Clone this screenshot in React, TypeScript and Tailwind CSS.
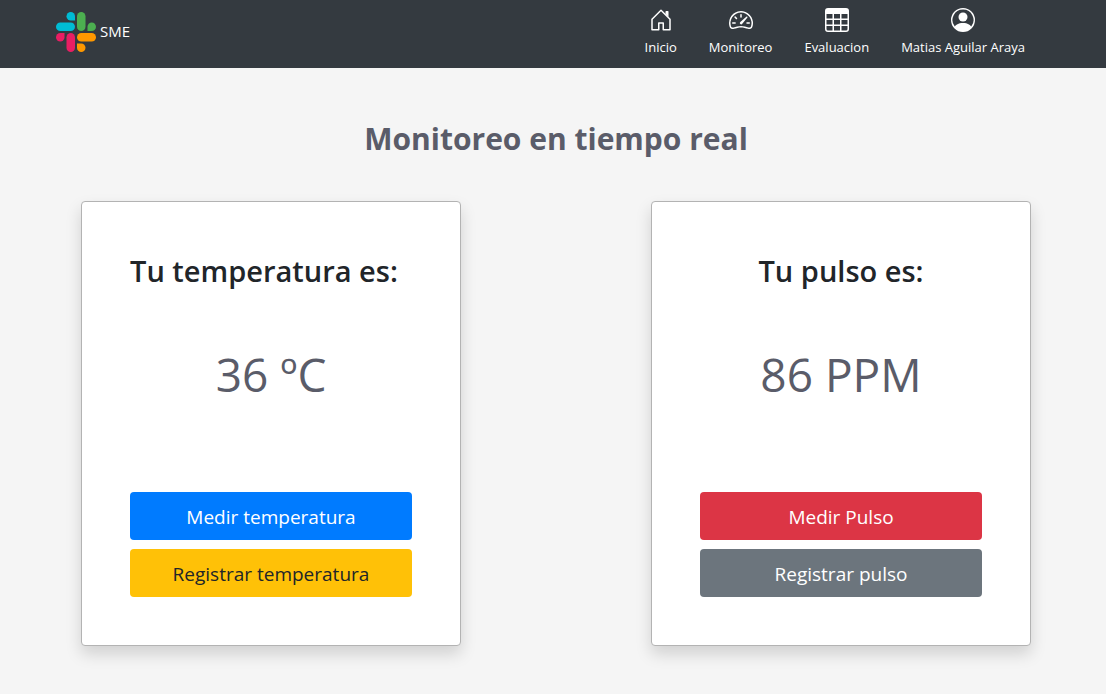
import { BsSpeedometer2, BsTable, BsPersonCircle } from "react-icons/bs";
import type { ReactNode } from "react";

function Logo() {
  return (
    <svg className="size-10" viewBox="0 0 40 40" aria-hidden="true">
      <g fill="#00bcd4">
        <path d="M19 8.500V4.250A4.250 4.250 0 1 0 14.750 8.500z" />
        <rect x="0" y="10.500" width="19" height="8.500" rx="4.250" />
      </g>
      <g fill="#4caf50">
        <rect x="21" y="0" width="8.500" height="19" rx="4.250" />
        <path d="M31.500 19v-4.250a4.250 4.250 0 1 1 4.250 4.250z" />
      </g>
      <g fill="#e91e63">
        <path d="M8.500 21v4.250A4.250 4.250 0 1 1 4.250 21z" />
        <rect x="10.500" y="21" width="8.500" height="19" rx="4.250" />
      </g>
      <g fill="#ff9800">
        <rect x="21" y="21" width="19" height="8.500" rx="4.250" />
        <path d="M21 31.500h4.250A4.250 4.250 0 1 1 21 35.750z" />
      </g>
    </svg>
  );
}

function HouseIcon() {
  return (
    <svg className="size-6" viewBox="0 0 16 16" fill="currentColor" aria-hidden="true">
      <path
        fillRule="evenodd"
        d="M7.646 1.146a.5.5 0 0 1 .708 0l6 6a.5.5 0 0 1 .146.354v7a.5.5 0 0 1-.5.5H9.500a.5.5 0 0 1-.5-.5v-4H7v4a.5.5 0 0 1-.5.5H2a.5.5 0 0 1-.5-.5v-7a.5.5 0 0 1 .146-.354l6-6zM2.500 7.707V14H6v-4a.5.5 0 0 1 .5-.5h3a.5.5 0 0 1 .5.5v4h3.500V7.707L8 2.207l-5.500 5.500z"
      />
      <path d="M13 2.500V6l-2-2V2.500a.5.5 0 0 1 .5-.5h1a.5.5 0 0 1 .5.5z" />
    </svg>
  );
}

function NavItem({ icon, label }: { icon: ReactNode; label: string }) {
  return (
    <li>
      <a href="#" className="flex flex-col items-center gap-[3px] px-4 text-[13px] leading-6 text-white">
        {icon}
        <span>{label}</span>
      </a>
    </li>
  );
}

type CardProps = {
  title: string;
  titleAlign: string;
  value: string;
  actions: { label: string; style: string }[];
};

function ReadingCard({ title, titleAlign, value, actions }: CardProps) {
  return (
    <section className="w-full max-w-[380px] rounded border border-[#b3b3b3] bg-white p-12 shadow-[0_8px_16px_rgba(0,0,0,0.15)]">
      <h2 className={`text-[29px] leading-[42px] font-semibold whitespace-nowrap text-[#212529] ${titleAlign}`}>{title}</h2>
      <p className="mt-[46px] text-center text-[46px] leading-[72px] text-[#5a5c69]">{value}</p>
      <div className="mt-[82px] flex flex-col gap-[9px]">
        {actions.map((action) => (
          <button key={action.label} type="button" className={`h-12 rounded pt-[2px] text-[19px] ${action.style}`}>
            {action.label}
          </button>
        ))}
      </div>
    </section>
  );
}

export default function App() {
  return (
    <div className="min-h-screen bg-[#f5f5f5] font-['Open_Sans','Noto_Sans',sans-serif]">
      <header className="flex items-center justify-between bg-[#343a40] pt-2 pr-[65px] pb-[9px] pl-14 text-white">
        <a href="#" className="mb-1 flex items-center gap-1 text-[15px]">
          <Logo />
          <span>SME</span>
        </a>
        <nav>
          <ul className="flex">
            <NavItem icon={<HouseIcon />} label="Inicio" />
            <NavItem icon={<BsSpeedometer2 className="size-6" />} label="Monitoreo" />
            <NavItem icon={<BsTable className="size-6" />} label="Evaluacion" />
            <NavItem icon={<BsPersonCircle className="size-6" />} label="Matias Aguilar Araya" />
          </ul>
        </nav>
      </header>
      <main className="pt-[47px] pl-[6px]">
        <h1 className="text-center text-[30px] leading-[48px] font-bold text-[#5a5c69]">Monitoreo en tiempo real</h1>
        <div className="mx-auto mt-[38px] flex max-w-[950px] justify-between gap-6">
          <ReadingCard
            title="Tu temperatura es:"
            titleAlign="text-left"
            value="36 ºC"
            actions={[
              { label: "Medir temperatura", style: "bg-[#007bff] text-white" },
              { label: "Registrar temperatura", style: "bg-[#ffc107] text-[#212529]" },
            ]}
          />
          <ReadingCard
            title="Tu pulso es:"
            titleAlign="text-center"
            value="86 PPM"
            actions={[
              { label: "Medir Pulso", style: "bg-[#dc3545] text-white" },
              { label: "Registrar pulso", style: "bg-[#6c757d] text-white" },
            ]}
          />
        </div>
      </main>
    </div>
  );
}
